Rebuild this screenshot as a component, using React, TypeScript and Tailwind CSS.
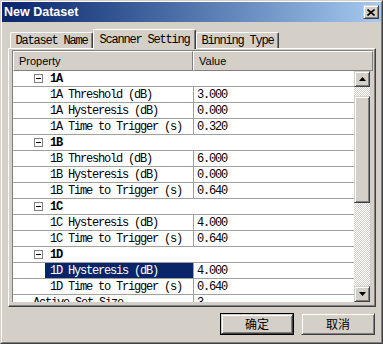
import React from "react";

type Row =
  | { kind: "group"; label: string }
  | { kind: "item"; label: string; value: string; selected?: boolean }
  | { kind: "top"; label: string; value: string };

const rows: Row[] = [
  { kind: "group", label: "1A" },
  { kind: "item", label: "1A Threshold (dB)", value: "3.000" },
  { kind: "item", label: "1A Hysteresis (dB)", value: "0.000" },
  { kind: "item", label: "1A Time to Trigger (s)", value: "0.320" },
  { kind: "group", label: "1B" },
  { kind: "item", label: "1B Threshold (dB)", value: "6.000" },
  { kind: "item", label: "1B Hysteresis (dB)", value: "0.000" },
  { kind: "item", label: "1B Time to Trigger (s)", value: "0.640" },
  { kind: "group", label: "1C" },
  { kind: "item", label: "1C Hysteresis (dB)", value: "4.000" },
  { kind: "item", label: "1C Time to Trigger (s)", value: "0.640" },
  { kind: "group", label: "1D" },
  { kind: "item", label: "1D Hysteresis (dB)", value: "4.000", selected: true },
  { kind: "item", label: "1D Time to Trigger (s)", value: "0.640" },
  { kind: "top", label: "Active Set Size", value: "3" },
];

// classic win32 3d edges
const raised =
  "border border-t-[#d4d0c8] border-l-[#d4d0c8] border-b-[#404040] border-r-[#404040] shadow-[inset_1px_1px_#fff,inset_-1px_-1px_#808080]";
const mono = "font-['Liberation_Mono',monospace] text-[12px] tracking-[-1.2px]";
const checker =
  "bg-[repeating-conic-gradient(#ffffff_0_25%,#d4d0c8_0_50%)] bg-[length:2px_2px]";

function MinusBox() {
  return (
    <span className="flex h-[9px] w-[9px] items-center justify-center border border-[#808080] bg-white">
      <span className="h-px w-[5px] bg-black" />
    </span>
  );
}

function Arrow({ up }: { up?: boolean }) {
  return (
    <svg width="7" height="4" viewBox="0 0 7 4">
      {up ? (
        <polygon points="3.5,0 7,4 0,4" fill="#000" />
      ) : (
        <polygon points="0,0 7,0 3.5,4" fill="#000" />
      )}
    </svg>
  );
}

function Tab({ label, active }: { label: string; active?: boolean }) {
  return (
    <div
      className={
        "flex items-center justify-center rounded-t-[2px] border-t border-l border-r border-t-white border-l-white border-r-[#404040] bg-[#d4d0c8] shadow-[inset_-1px_0_#808080] " +
        mono +
        (active ? " relative z-10 -mb-px h-[20px] w-[103px]" : " h-[16px] w-[83px]")
      }
    >
      {label}
    </div>
  );
}

function GridRow({ row }: { row: Row }) {
  if (row.kind === "group") {
    return (
      <div className="flex h-[16px] shrink-0 items-center border-b border-[#a0a0a0] bg-white">
        <div className="w-[21px]" />
        <MinusBox />
        <span className={"ml-[7px] font-bold " + mono}>{row.label}</span>
      </div>
    );
  }
  if (row.kind === "top") {
    return (
      <div className="flex h-[16px] shrink-0 border-b border-[#a0a0a0] bg-white">
        <div className={"flex w-[180px] items-center pl-[20px] " + mono}>{row.label}</div>
        <div className={"flex flex-1 items-center border-l border-[#a0a0a0] pl-[3px] " + mono}>
          {row.value}
        </div>
      </div>
    );
  }
  return (
    <div className="flex h-[16px] shrink-0 border-b border-[#a0a0a0] bg-white">
      <div className="w-[32px]" />
      <div
        className={
          "flex w-[148px] items-center pl-[5px] " +
          mono +
          (row.selected ? " bg-[#0a246a] text-white" : "")
        }
      >
        {row.label}
      </div>
      <div className={"flex flex-1 items-center border-l border-[#a0a0a0] pl-[3px] " + mono}>
        {row.value}
      </div>
    </div>
  );
}

export default function App() {
  return (
    <div className="h-[344px] w-[383px] border border-t-[#d4d0c8] border-l-[#d4d0c8] border-b-[#404040] border-r-[#404040] bg-[#d4d0c8] text-black">
      <div className="flex h-full flex-col border border-t-white border-l-white border-b-[#808080] border-r-[#808080]">
        {/* title bar */}
        <div className="flex h-[20px] shrink-0 items-center justify-between bg-linear-to-r from-[#0a246a] to-[#a6caf0] pl-[2px] pr-[2px]">
          <span className="font-['Liberation_Sans',Arial,sans-serif] text-[12.5px] font-bold text-white">
            New Dataset
          </span>
          <div className={"flex h-[14px] w-[16px] items-center justify-center bg-[#d4d0c8] " + raised}>
            <svg width="8" height="7" viewBox="0 0 8 7">
              <path d="M0.5 0.5 L7.5 6.5 M7.5 0.5 L0.5 6.5" stroke="#000" strokeWidth="1.6" />
            </svg>
          </div>
        </div>

        {/* tabs */}
        <div className="mt-[7px] flex h-[19px] items-end pl-[8px]">
          <Tab label="Dataset Name" />
          <Tab label="Scanner Setting" active />
          <Tab label="Binning Type" />
        </div>

        {/* tab panel */}
        <div className="ml-[6px] h-[259px] w-[368px] border border-t-white border-l-white border-b-[#404040] border-r-[#404040] pl-[3px] pt-px shadow-[inset_-1px_-1px_#808080]">
          <div className="flex h-[252px] w-[361px] flex-col border-l border-t border-[#808080] bg-[#d4d0c8]">
            {/* header */}
            <div className="flex h-[20px] shrink-0 font-['Liberation_Sans',Arial,sans-serif] text-[11px]">
              <div className="flex w-[180px] items-center border border-t-white border-l-white border-b-[#808080] border-r-[#808080] pl-[5px]">
                Property
              </div>
              <div className="flex flex-1 items-center border border-t-white border-l-white border-b-[#808080] border-r-[#808080] pl-[5px]">
                Value
              </div>
            </div>
            <div className="flex min-h-0 flex-1">
              <div className="flex w-[341px] flex-col overflow-hidden bg-white">
                {rows.map((r, i) => (
                  <GridRow key={i} row={r} />
                ))}
              </div>
              <div className="flex w-[16px] flex-col">
                <div className={"flex h-[16px] shrink-0 items-center justify-center bg-[#d4d0c8] " + raised}>
                  <Arrow up />
                </div>
                <div className={"h-[9px] shrink-0 " + checker} />
                <div className={"h-[107px] shrink-0 bg-[#d4d0c8] " + raised} />
                <div className={"flex-1 " + checker} />
                <div className={"flex h-[16px] shrink-0 items-center justify-center bg-[#d4d0c8] " + raised}>
                  <Arrow />
                </div>
              </div>
            </div>
          </div>
        </div>

        {/* buttons */}
        <div className="mt-[6px] flex justify-end gap-[7px] pr-[6px] font-['Noto_Sans_CJK_SC',sans-serif] text-[12px]">
          <div className="h-[22px] w-[74px] border border-black">
            <div className={"flex h-full w-full items-center justify-center bg-[#d4d0c8] " + raised}>确定</div>
          </div>
          <div className={"flex h-[22px] w-[74px] items-center justify-center bg-[#d4d0c8] " + raised}>
            取消
          </div>
        </div>
      </div>
    </div>
  );
}
